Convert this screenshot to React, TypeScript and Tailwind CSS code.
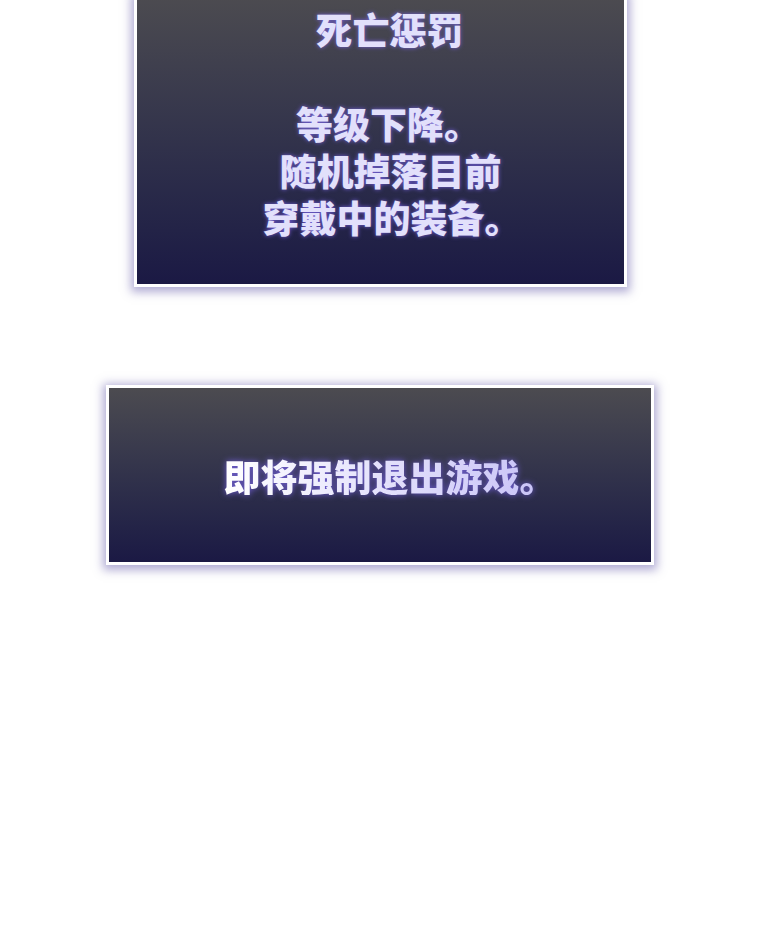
import React from 'react';

const panel =
  'border-[3px] border-white bg-gradient-to-b from-[#4c4b50] to-[#1b1944] shadow-[0_2px_9px_3px_rgba(100,90,170,0.5)]';

const heavy = 'font-black text-[37px]';

export default function App() {
  return (
    <div
      className="w-[760px] h-[947px] bg-white overflow-hidden"
      style={{ fontFamily: '"Noto Sans CJK SC", "Noto Sans", sans-serif' }}
    >
      <div className={`${panel} ml-[134px] mt-[-6px] w-[493px] h-[293px] flex flex-col items-center pt-[9px]`}>
        <div
          className={`${heavy} leading-[47px] text-[#e2e0fb] text-center [text-shadow:0_0_4px_rgba(120,100,230,0.9)]`}
        >
          <div className="pl-[18px]">死亡惩罚</div>
          <div className="h-[47px]" />
          <div className="pl-[16px]">等级下降。</div>
          <div className="pl-[20px]">随机掉落目前</div>
          <div className="pl-[23px]">穿戴中的装备。</div>
        </div>
      </div>

      <div className={`${panel} ml-[106px] mt-[98px] w-[548px] h-[180px] flex items-center justify-center pl-[20px]`}>
        <div className="[filter:drop-shadow(0_0_3px_rgba(120,100,230,0.9))]">
          <div className={`${heavy} leading-none pt-[2px] bg-gradient-to-r from-white to-[#c6c0f6] bg-clip-text text-transparent`}>
            即将强制退出游戏。
          </div>
        </div>
      </div>
    </div>
  );
}
